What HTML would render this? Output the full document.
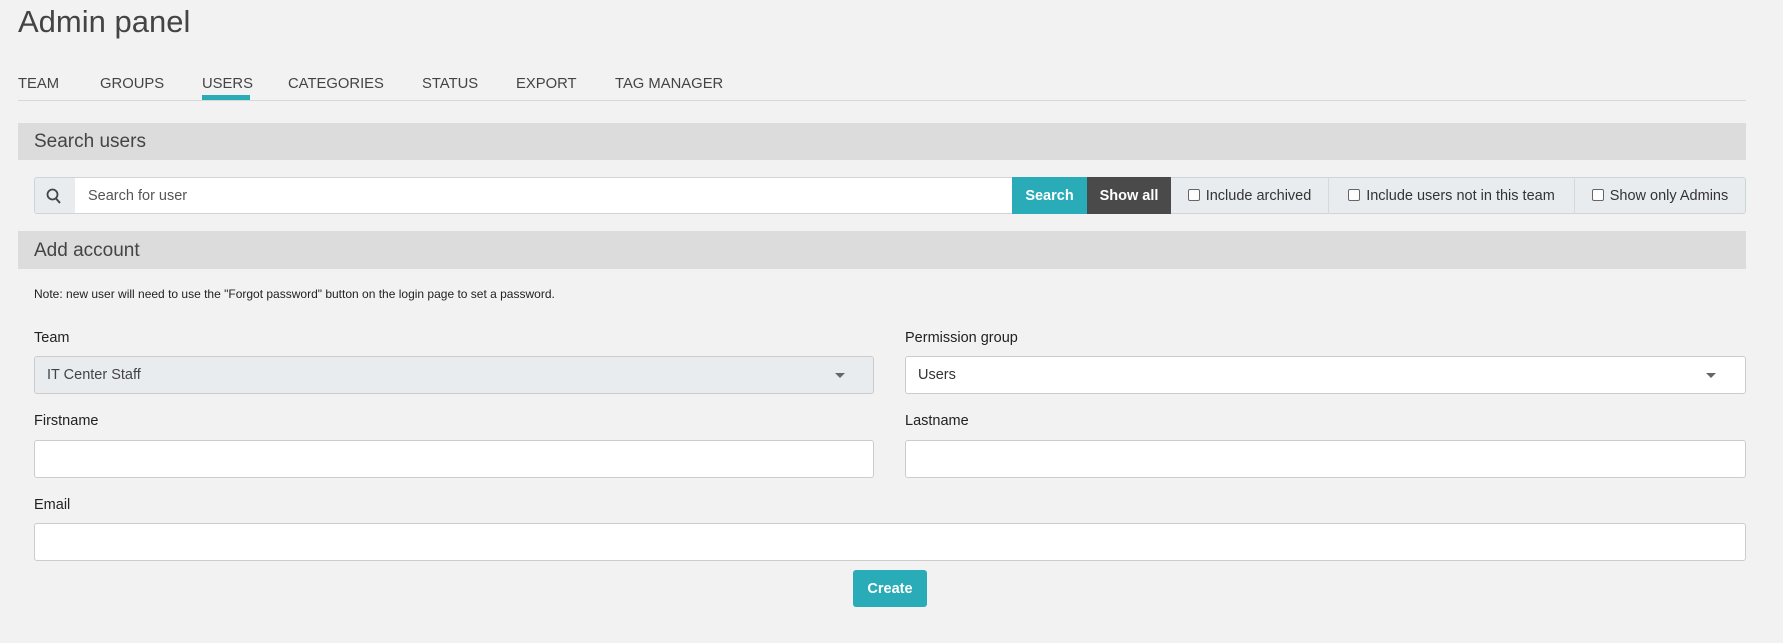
<!DOCTYPE html>
<html><head><meta charset="utf-8"><style>
*{box-sizing:border-box;margin:0;padding:0}
body{width:1783px;height:643px;background:#f2f2f2;font-family:"Liberation Sans",sans-serif;color:#333;position:relative;overflow:hidden}
.a{position:absolute}
h1{position:absolute;left:18px;top:4px;font-weight:normal;font-size:31px;color:#444}
.tab{position:absolute;top:76px;font-size:14.8px;color:#444}
.hdr{position:absolute;left:18px;width:1728px;background:#dcdcdc;font-size:19px;color:#444;padding-left:16px}
.lbl{position:absolute;font-size:14.5px;color:#222}
.inp{position:absolute;background:#fff;border:1px solid #ccc;border-radius:3px}
.chk{display:inline-block;width:12px;height:12px;border:1.5px solid #666;border-radius:2px;vertical-align:-1px;margin-right:6px;background:#fff}
.seg{position:absolute;top:177px;height:37px;font-size:14.5px;line-height:38px;text-align:center;border-left:1px solid #d5d9dd}
.arr{position:absolute;width:0;height:0;border-left:5px solid transparent;border-right:5px solid transparent;border-top:5px solid #666}
</style></head><body>
<h1>Admin panel</h1>
<div class="tab" style="left:18px">TEAM</div>
<div class="tab" style="left:100px">GROUPS</div>
<div class="tab" style="left:202px">USERS</div>
<div class="tab" style="left:288px">CATEGORIES</div>
<div class="tab" style="left:422px">STATUS</div>
<div class="tab" style="left:516px">EXPORT</div>
<div class="tab" style="left:615px">TAG MANAGER</div>
<div class="a" style="left:18px;top:100px;width:1728px;height:1px;background:#d8d8d8"></div>
<div class="a" style="left:202px;top:95px;width:48px;height:5px;background:#2aabb8"></div>

<div class="hdr" style="top:123px;height:37px;line-height:38px">Search users</div>

<div class="a" style="left:34px;top:177px;width:1712px;height:37px;border:1px solid #cfd4d9;border-radius:3px;background:#e9ecef"></div>
<div class="a" style="left:75px;top:177px;width:937px;height:37px;background:#fff;border-top:1px solid #cfd4d9;border-bottom:1px solid #cfd4d9"></div>
<svg class="a" style="left:46px;top:188px" width="16" height="17" viewBox="0 0 16 17"><circle cx="6.5" cy="6.5" r="5" fill="none" stroke="#444" stroke-width="1.8"/><path d="M10 10.5L14 15" stroke="#444" stroke-width="2"/></svg>
<div class="a" style="left:88px;top:188px;font-size:14.5px;color:#555">Search for user</div>
<div class="seg" style="left:1012px;width:75px;background:#2aabb8;color:#fff;font-weight:bold;border:none">Search</div>
<div class="seg" style="left:1087px;width:84px;background:#4a4a4a;color:#fff;font-weight:bold;border:none">Show all</div>
<div class="seg" style="left:1171px;width:157px;border:none"><span class="chk"></span>Include archived</div>
<div class="seg" style="left:1328px;width:246px"><span class="chk"></span>Include users not in this team</div>
<div class="seg" style="left:1574px;width:171px"><span class="chk"></span>Show only Admins</div>

<div class="hdr" style="top:231px;height:38px;line-height:39px">Add account</div>
<div class="a" style="left:34px;top:287px;font-size:12px;color:#222">Note: new user will need to use the "Forgot password" button on the login page to set a password.</div>

<div class="lbl" style="left:34px;top:330px">Team</div>
<div class="inp" style="left:34px;top:356px;width:840px;height:38px;background:#e9ecef"></div>
<div class="a" style="left:47px;top:367px;font-size:14.5px;color:#444">IT Center Staff</div>
<div class="arr" style="left:835px;top:373px"></div>
<div class="lbl" style="left:905px;top:330px">Permission group</div>
<div class="inp" style="left:905px;top:356px;width:841px;height:38px"></div>
<div class="a" style="left:918px;top:367px;font-size:14.5px;color:#333">Users</div>
<div class="arr" style="left:1706px;top:373px"></div>

<div class="lbl" style="left:34px;top:413px">Firstname</div>
<div class="inp" style="left:34px;top:440px;width:840px;height:38px"></div>
<div class="lbl" style="left:905px;top:413px">Lastname</div>
<div class="inp" style="left:905px;top:440px;width:841px;height:38px"></div>

<div class="lbl" style="left:34px;top:497px">Email</div>
<div class="inp" style="left:34px;top:523px;width:1712px;height:38px"></div>

<div class="a" style="left:853px;top:570px;width:74px;height:37px;background:#2aabb8;border-radius:3px;color:#fff;font-weight:bold;font-size:14.5px;line-height:38px;text-align:center">Create</div>
</body></html>
